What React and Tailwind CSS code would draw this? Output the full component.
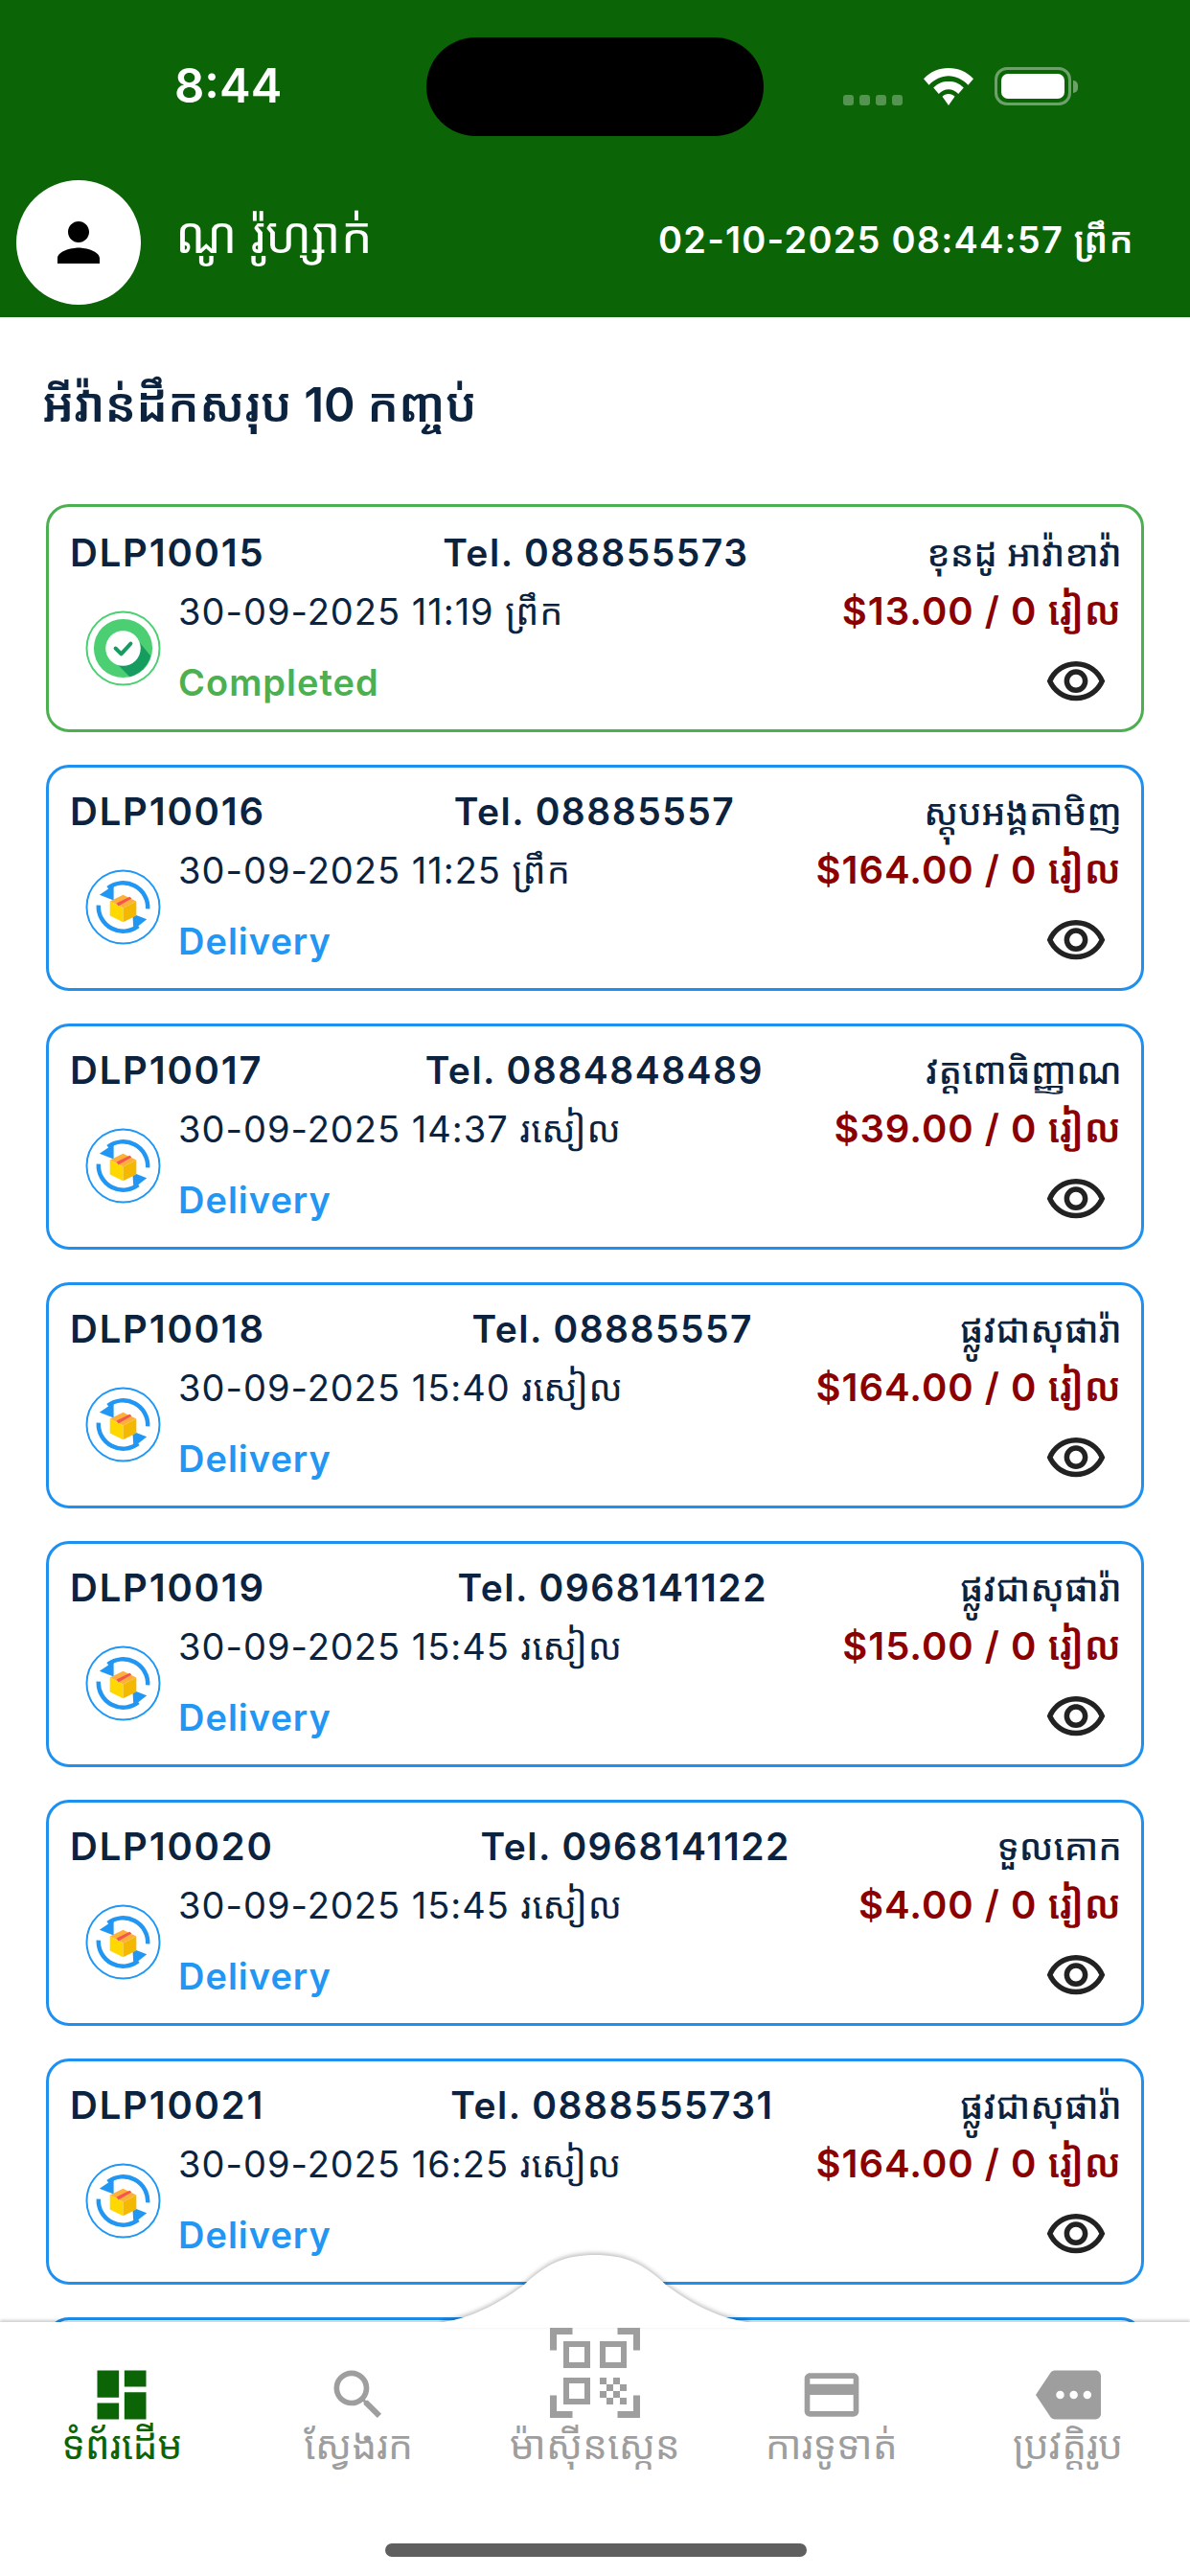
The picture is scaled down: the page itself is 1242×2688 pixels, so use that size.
import React from 'react';
import { MdPerson, MdSearch, MdCreditCard, MdMore, MdDashboard, MdOutlineVisibility } from 'react-icons/md';

const orders = [
  { id: 'DLP10015', tel: '088855573', name: 'ខុនដូ អាវ៉ាខាវ៉ា', date: '30-09-2025 11:19 ព្រឹក', price: '$13.00', done: true },
  { id: 'DLP10016', tel: '08885557', name: 'ស្ដុបអង្គតាមិញ', date: '30-09-2025 11:25 ព្រឹក', price: '$164.00' },
  { id: 'DLP10017', tel: '0884848489', name: 'វត្តពោធិញ្ញាណ', date: '30-09-2025 14:37 រសៀល', price: '$39.00' },
  { id: 'DLP10018', tel: '08885557', name: 'ផ្លូវជាសុផារ៉ា', date: '30-09-2025 15:40 រសៀល', price: '$164.00' },
  { id: 'DLP10019', tel: '0968141122', name: 'ផ្លូវជាសុផារ៉ា', date: '30-09-2025 15:45 រសៀល', price: '$15.00' },
  { id: 'DLP10020', tel: '0968141122', name: 'ទួលគោក', date: '30-09-2025 15:45 រសៀល', price: '$4.00' },
  { id: 'DLP10021', tel: '0888555731', name: 'ផ្លូវជាសុផារ៉ា', date: '30-09-2025 16:25 រសៀល', price: '$164.00' },
];

function DoneIcon() {
  return (
    <svg viewBox="0 0 80 80" className="w-[79px] h-[79px]">
      <circle cx="40" cy="40" r="38.5" fill="#fff" stroke="#4ccf73" strokeWidth="2" />
      <circle cx="40" cy="40" r="31" fill="#4ccf73" />
      <path d="M29 52 L52 27 L69 48 A31 31 0 0 1 47 70 Z" fill="#169c5f" />
      <circle cx="40" cy="40" r="18.5" fill="#fff" />
      <path d="M32 40 L38 46 L48 35" fill="none" stroke="#169c5f" strokeWidth="4" strokeLinecap="round" strokeLinejoin="round" />
    </svg>
  );
}

function DeliveryIcon() {
  return (
    <svg viewBox="0 0 80 80" className="w-[79px] h-[79px]">
      <circle cx="40" cy="40" r="38.5" fill="#fff" stroke="#2196f3" strokeWidth="2" />
      <path d="M66 42 A26 26 0 0 0 24 20" fill="none" stroke="#2196f3" strokeWidth="4.5" />
      <path d="M14 38 A26 26 0 0 0 56 60" fill="none" stroke="#2196f3" strokeWidth="4.5" />
      <path d="M15 27 L30 17 L30 33 Z" fill="#2196f3" />
      <path d="M65 53 L50 47 L51 64 Z" fill="#2196f3" />
      <path d="M40 27 L54 34 L40 41 L26 34 Z" fill="#fdb03a" />
      <path d="M26 34 L40 41 L40 56 L26 49 Z" fill="#ffd800" />
      <path d="M54 34 L40 41 L40 56 L54 49 Z" fill="#f5b800" />
      <path d="M33 36 L47 29 L49 31 L35 39 Z" fill="#f4554f" />
    </svg>
  );
}

function QrIcon() {
  return (
    <svg viewBox="0 0 94 94" className="w-[94px] h-[94px]" fill="#9e9e9e">
      <path d="M0 0h23.5v7H7v16.5H0zM70.5 0H94v23.5h-7V7H70.5zM0 70.5h7V87h16.5v7H0zM87 70.5h7V94H70.5v-7H87z" />
      <path fillRule="evenodd" d="M14 14h28v28H14zM20 20v16h16V20zM52 14h28v28H52zM58 20v16h16V20zM14 52h28v28H14zM20 58v16h16V58z" />
      <path d="M52 52h7v7h-7zM66 52h7v7h-7zM59 59h7v7h-7zM73 59h7v7h-7zM52 66h7v7h-7zM66 66h7v7h-7zM59 73h7v7h-7zM73 73h7v7h-7z" />
    </svg>
  );
}

function OrderCard({ order }) {
  const tone = order.done ? 'text-[#4caf50]' : 'text-[#2196f3]';
  const border = order.done ? 'h-[238px] pt-[20px] border-[#4caf50]' : 'h-[236px] pt-[18px] border-[#1e90f0]';
  return (
    <div className={`shrink-0 rounded-[24px] border-[3px] bg-white pl-[22px] pr-[20px] ${border}`}>
      <div className="flex h-[56px] items-center justify-between text-[#0c2340]">
        <span className="text-[40px] font-semibold tracking-[1.8px]">{order.id}</span>
        <span className="text-[39px] font-semibold tracking-[1.5px]">Tel. {order.tel}</span>
        <span className="text-[38px] font-medium">{order.name}</span>
      </div>
      <div className="mt-[2px] flex">
        <div className="flex w-[113px] shrink-0 items-center pl-[16px]">
          {order.done ? <DoneIcon /> : <DeliveryIcon />}
        </div>
        <div className="flex flex-1 flex-col">
          <div className="flex h-[62px] items-center justify-between">
            <span className="text-[38px] tracking-[1px] text-[#0c2340]">{order.date}</span>
            <span className="text-[40px] font-semibold tracking-[1px] text-[#8b0000]">{order.price} / 0 រៀល</span>
          </div>
          <div className="mt-[10px] flex h-[66px] items-center justify-between">
            <span className={`text-[38px] font-semibold tracking-[1px] ${tone}`}>{order.done ? 'Completed' : 'Delivery'}</span>
            <MdOutlineVisibility className="mr-[15px] text-[#222]" size={66} />
          </div>
        </div>
      </div>
    </div>
  );
}

function NavItem({ label, active, icon }) {
  return (
    <div className="flex flex-col items-center">
      <div className="flex h-[106px] items-end justify-center">{icon}</div>
      <span className={`mt-[-10px] whitespace-nowrap text-[41px] leading-[56px] ${active ? 'text-[#0b6406]' : 'text-[#9e9e9e]'}`}>{label}</span>
    </div>
  );
}

export default function App() {
  return (
    <div className="relative flex h-[2688px] w-[1242px] flex-col overflow-hidden bg-white font-['Inter','Noto_Sans_Khmer','Noto_Sans',sans-serif]">
      <header className="relative h-[331px] shrink-0 bg-[#0b6406] text-white">
        <div className="flex h-[180px] items-center justify-between pl-[182px] pr-[117px]">
          <span className="text-[49px] font-semibold">8:44</span>
          <div className="absolute left-[445px] top-[39px] h-[103px] w-[352px] rounded-full bg-black" />
          <div className="flex items-center gap-[21px]">
            <div className="mt-[29px] flex gap-[6px] opacity-30">
              <i className="h-[11px] w-[11px] rounded-[3px] bg-white" />
              <i className="h-[11px] w-[11px] rounded-[3px] bg-white" />
              <i className="h-[11px] w-[11px] rounded-[3px] bg-white" />
              <i className="h-[11px] w-[11px] rounded-[3px] bg-white" />
            </div>
            <svg viewBox="0 0 56 42" className="h-[39px] w-[54px]" fill="#fff">
              <path d="M28 0C17 0 8 4 0 12l6 7c6-6 14-10 22-10s16 4 22 10l6-7C48 4 39 0 28 0z" />
              <path d="M28 15c-7 0-12 2-17 7l6 7c3-3 7-5 11-5s8 2 11 5l6-7c-5-5-10-7-17-7z" />
              <path d="M28 29c-3 0-5 1-7 3l7 10 7-10c-2-2-4-3-7-3z" />
            </svg>
            <div className="flex items-center">
              <div className="h-[40px] w-[80px] rounded-[13px] border-[3px] border-white/40 p-[4px]">
                <div className="h-full w-full rounded-[7px] bg-white" />
              </div>
              <div className="ml-[2px] h-[13px] w-[5px] rounded-r-full bg-white/40" />
            </div>
          </div>
        </div>
        <div className="flex h-[151px] items-start justify-between pl-[17px] pr-[58px]">
          <div className="flex items-center">
            <div className="mt-[8px] flex h-[130px] w-[130px] items-center justify-center rounded-full bg-white">
              <MdPerson className="text-black" size={66} />
            </div>
            <span className="ml-[36px] mt-[-6px] text-[52px]">ណូ រ៉ូហ្សាក់</span>
          </div>
          <span className="mt-[42px] text-[38px] font-semibold tracking-[1.2px]">02-10-2025 08:44:57 ព្រឹក</span>
        </div>
      </header>

      <main className="mb-[265px] flex min-h-0 flex-1 flex-col overflow-hidden px-[48px]">
        <h1 className="ml-[-4px] mb-[56px] mt-[44px] h-[95px] shrink-0 text-[49.5px] font-semibold leading-[95px] text-[#0c2340]">អីវ៉ាន់ដឹកសរុប 10 កញ្ចប់</h1>
        <div className="flex flex-col gap-[34px]">
          {orders.map((o) => <OrderCard key={o.id} order={o} />)}
          <div className="h-[236px] shrink-0 rounded-[24px] border-[3px] border-[#1e90f0] bg-white" />
        </div>
      </main>

      <nav className="absolute bottom-0 left-0 right-0 h-[265px] bg-white shadow-[0_-2px_3px_rgba(0,0,0,0.2)]">
        <svg viewBox="0 0 320 80" className="absolute left-[461px] top-[-74px] h-[80px] w-[320px] overflow-visible drop-shadow-[0_-2px_2px_rgba(0,0,0,0.25)]">
          <path d="M0 74 C20 72 50 62 85 36 C110 12 130 4 160 4 C190 4 210 12 235 36 C270 62 300 72 320 74 L320 80 L0 80 Z" fill="#fff" />
        </svg>
        <div className="absolute left-0 right-0 top-0 h-[6px] bg-white" />
        <div className="relative grid grid-cols-5 px-[4px] pt-[4px]">
          <NavItem label="ទំព័រដើម" active icon={<MdDashboard className="text-[#0b6406]" size={68} />} />
          <NavItem label="ស្វែងរក" icon={<MdSearch className="text-[#9e9e9e]" size={68} />} />
          <NavItem label="ម៉ាស៊ីនស្កេន" icon={<span className="mb-[10px]"><QrIcon /></span>} />
          <NavItem label="ការទូទាត់" icon={<MdCreditCard className="text-[#9e9e9e]" size={68} />} />
          <NavItem label="ប្រវត្តិរូប" icon={<MdMore className="text-[#9e9e9e]" size={68} />} />
        </div>
        <div className="absolute bottom-[20px] left-[402px] h-[14px] w-[440px] rounded-full bg-[#5f5f5f]" />
      </nav>
    </div>
  );
}
